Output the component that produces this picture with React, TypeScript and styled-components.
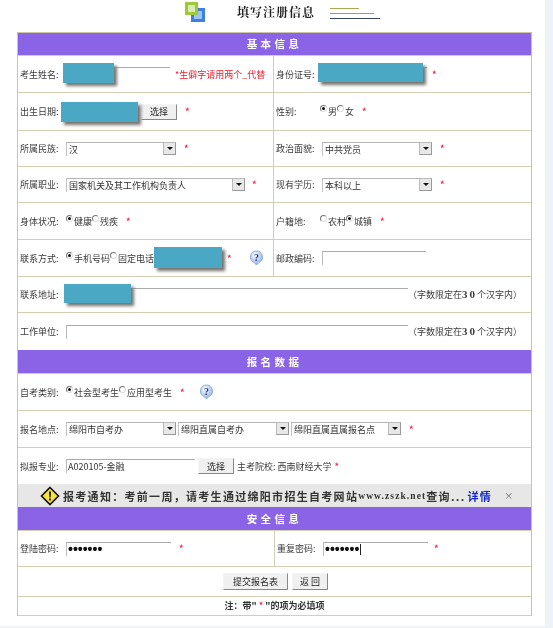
import React from 'react'
import styled, { createGlobalStyle } from 'styled-components'

const GlobalStyle = createGlobalStyle`
  html, body {
    margin: 0;
    padding: 0;
    background: #eef3f7;
  }
`

const Page = styled.div`
  width: 545px;
  height: 626px;
  box-sizing: border-box;
  padding: 0 13px 0 17px;
  background: #fff;
  color: #3a3a3a;
  font-family: 'Noto Sans CJK SC', 'Liberation Sans', sans-serif;
  font-size: 9px;
  filter: blur(0.3px);
`

const TitleBar = styled.div`
  height: 32px;
  display: flex;
  align-items: flex-start;
`

const Logo = styled.svg`
  width: 21px;
  height: 20px;
  margin: 2px 0 0 168px;
`

const Title = styled.h1`
  margin: 3px 0 0 31px;
  font-family: 'Noto Serif CJK SC', 'Noto Sans CJK SC', sans-serif;
  font-size: 12px;
  line-height: 18px;
  font-weight: 700;
  letter-spacing: 1px;
  color: #222;
`

const TitleLines = styled.div`
  display: flex;
  flex-direction: column;
  gap: 4px;
  margin: 8px 0 0 15px;
`

const TitleLine = styled.i<{ $w: number; $c: string }>`
  display: block;
  height: 1px;
  width: ${(p) => p.$w}px;
  background: ${(p) => p.$c};
`

const Table = styled.div`
  width: 515px;
  border: 1px solid #c9c5a6;
  box-sizing: border-box;
`

const Section = styled.div<{ $h?: number }>`
  height: ${(p) => p.$h ?? 23}px;
  background: #8a63e6;
  color: #fff;
  font-weight: 700;
  font-size: 10.5px;
  letter-spacing: 3.4px;
  line-height: ${(p) => p.$h ?? 23}px;
  text-align: center;
`

const Row = styled.div<{ $h: number }>`
  display: flex;
  height: ${(p) => p.$h}px;
  box-sizing: border-box;
  border-top: 1px solid #d3cfb4;
  border-bottom: 1px solid #d3cfb4;
  margin-bottom: -1px;
`

const Cell = styled.div<{ $w?: number }>`
  display: flex;
  align-items: center;
  box-sizing: border-box;
  padding-left: 2px;
  white-space: nowrap;
  ${(p) => (p.$w ? `width: ${p.$w}px;` : 'flex: 1;')}
  & + & {
    border-left: 1px solid #d3cfb4;
  }
`

const Label = styled.span<{ $w?: number }>`
  display: inline-block;
  width: ${(p) => p.$w ?? 46}px;
  flex: none;
`

const Star = styled.span<{ $l?: number }>`
  color: #f0304a;
  font-weight: 700;
  margin-left: ${(p) => p.$l ?? 8}px;
`

const RedNote = styled.span`
  color: #f01828;
  margin-left: 5px;
`

const Field = styled.span<{ $w: number }>`
  position: relative;
  display: inline-block;
  width: ${(p) => p.$w}px;
  height: 14px;
  flex: none;
`

const TextInput = styled.input`
  display: block;
  width: 100%;
  height: 14px;
  box-sizing: border-box;
  margin: 0;
  padding: 0 1px;
  border: none;
  border-top: 1px solid #aaa;
  border-left: 1px solid #bbb;
  outline: none;
  background: transparent;
  color: #333;
  font: inherit;
  &[type='password'] {
    font-family: 'Liberation Sans', sans-serif;
    font-size: 14px;
    font-weight: 700;
    color: #111;
  }
`

const Caret = styled.i`
  position: absolute;
  left: 37px;
  top: 2px;
  width: 1px;
  height: 11px;
  background: #222;
`

const Redacted = styled.span<{ $l: number; $t: number; $w: number; $h: number }>`
  position: absolute;
  left: ${(p) => p.$l}px;
  top: ${(p) => p.$t}px;
  width: ${(p) => p.$w}px;
  height: ${(p) => p.$h}px;
  background: #4aa8c4;
  box-shadow: 3px 3px 3px #77756f;
`

const SelectBox = styled.span<{ $w: number }>`
  position: relative;
  display: inline-block;
  flex: none;
  width: ${(p) => p.$w}px;
  height: 14px;
  margin-right: 2px;
`

const NativeSelect = styled.select`
  appearance: none;
  display: block;
  width: 100%;
  height: 14px;
  box-sizing: border-box;
  margin: 0;
  padding: 0 2px;
  border: none;
  border-top: 1px solid #b5b5b5;
  border-left: 1px solid #c4c4c4;
  background: transparent;
  color: #333;
  font: inherit;
  outline: none;
`

const Arrow = styled.i`
  position: absolute;
  right: 0;
  top: 0;
  width: 13px;
  height: 13px;
  box-sizing: border-box;
  border: 1px solid #999;
  border-top-color: #bbb;
  border-left-color: #bbb;
  background: #e8e8e8;
  &::after {
    content: '';
    position: absolute;
    left: 3px;
    top: 4px;
    border: 3px solid transparent;
    border-top: 3px solid #111;
    border-bottom: none;
  }
`

const PushButton = styled.button<{ $w: number; $l?: number }>`
  width: ${(p) => p.$w}px;
  height: 16px;
  flex: none;
  box-sizing: border-box;
  margin-left: ${(p) => p.$l ?? 0}px;
  padding: 0;
  border: 1px solid #f4f4f4;
  border-right-color: #888;
  border-bottom-color: #888;
  background: #f0f0f0;
  color: #222;
  font: inherit;
  line-height: 13px;
`

const RadioGroup = styled.span`
  display: inline-flex;
  align-items: center;
`

const RadioMark = styled.i<{ $on?: boolean }>`
  position: relative;
  top: -3px;
  width: 7px;
  height: 7px;
  box-sizing: border-box;
  margin-right: 1px;
  border-radius: 50%;
  border: 1px solid #777;
  border-right-color: #ddd;
  border-bottom-color: #ddd;
  ${(p) =>
    p.$on &&
    `&::after {
      content: '';
      position: absolute;
      left: 1px;
      top: 1px;
      width: 3px;
      height: 3px;
      border-radius: 50%;
      background: #111;
    }`}
`

const HelpIcon = styled.svg<{ $l: number }>`
  width: 15px;
  height: 16px;
  margin-left: ${(p) => p.$l}px;
  flex: none;
`

const Hint = styled.span<{ $l?: number }>`
  margin-left: ${(p) => p.$l ?? 0}px;
  & b {
    font-family: 'Liberation Serif', serif;
    font-size: 11px;
    letter-spacing: 2px;
  }
`

const Notice = styled.div`
  height: 23px;
  display: flex;
  align-items: center;
  background: #e7e7e7;
  color: #333;
  font-weight: 700;
  font-size: 11px;
  letter-spacing: 1.3px;
  white-space: nowrap;
`

const WarnIcon = styled.svg`
  width: 20px;
  height: 20px;
  margin: 0 3px 0 22px;
  flex: none;
`

const NoticeUrl = styled.span`
  font-family: 'Liberation Serif', serif;
  font-size: 9.5px;
  letter-spacing: 1.1px;
`

const NoticeLink = styled.a`
  color: #1428c8;
  margin-left: 2px;
`

const CloseMark = styled.span`
  margin-left: 12px;
  color: #666;
  font-weight: 400;
  font-size: 9px;
`

const ButtonCell = styled.div`
  flex: 1;
  display: flex;
  justify-content: center;
  align-items: center;
  gap: 4px;
  padding-left: 2px;
  & > button {
    height: 17px;
  }
`

const FootNote = styled.div`
  flex: 1;
  text-align: center;
  font-weight: 700;
  line-height: 18px;
  color: #333;
`

const Help = ({ l }: { l: number }) => (
  <HelpIcon $l={l} viewBox="0 0 15 16">
    <defs>
      <radialGradient id="helpFill" cx="0.4" cy="0.3" r="0.8">
        <stop offset="0" stopColor="#ffffff" />
        <stop offset="1" stopColor="#7fa6dc" />
      </radialGradient>
    </defs>
    <path d="M7.5 1a6 6 0 0 1 2.4 11.5L7.5 15 5.1 12.5A6 6 0 0 1 7.5 1z" fill="url(#helpFill)" stroke="#8fb0dc" />
    <text x="7.5" y="11" textAnchor="middle" fontSize="10" fontWeight="700" fill="#1c2f9c" fontFamily="Liberation Serif, serif">
      ?
    </text>
  </HelpIcon>
)

const Radio = ({ on, children }: { on?: boolean; children: React.ReactNode }) => (
  <>
    <RadioMark $on={on} />
    <span>{children}</span>
  </>
)

const Select = ({ w, value }: { w: number; value: string }) => (
  <SelectBox $w={w}>
    <NativeSelect defaultValue={value}>
      <option>{value}</option>
    </NativeSelect>
    <Arrow />
  </SelectBox>
)

const LimitHint = () => (
  <Hint>
    （字数限定在<b>30</b>个汉字内）
  </Hint>
)

export default function App() {
  return (
    <>
      <GlobalStyle />
      <Page>
        <TitleBar>
          <Logo viewBox="0 0 21 20">
            <rect x="6" y="6" width="14" height="14" fill="#3f7fe0" />
            <rect x="9" y="9" width="8" height="8" fill="#9cc4f2" />
            <rect x="0" y="0" width="13" height="13" fill="#9cc83c" />
            <rect x="3" y="3" width="7" height="7" fill="#dbeab0" />
          </Logo>
          <Title>填写注册信息</Title>
          <TitleLines>
            <TitleLine $w={29} $c="#a8a850" />
            <TitleLine $w={44} $c="#45b4dc" />
            <TitleLine $w={50} $c="#3a4468" />
          </TitleLines>
        </TitleBar>
        <Table>
          <Section $h={22}>基本信息</Section>
          <Row $h={38}>
            <Cell $w={255}>
              <Label>考生姓名:</Label>
              <Field $w={104}>
                <TextInput readOnly />
                <Redacted $l={-3} $t={-4} $w={51} $h={20} />
              </Field>
              <RedNote>*生僻字请用两个_代替</RedNote>
            </Cell>
            <Cell>
              <Label>身份证号:</Label>
              <Field $w={105}>
                <TextInput readOnly />
                <Redacted $l={-4} $t={-4} $w={105} $h={19} />
              </Field>
              <Star $l={5}>*</Star>
            </Cell>
          </Row>
          <Row $h={39}>
            <Cell $w={255}>
              <Label $w={41}>出生日期:</Label>
              <Field $w={80}>
                <Redacted $l={0} $t={-3} $w={77} $h={20} />
              </Field>
              <PushButton $w={36}>选择</PushButton>
              <Star>*</Star>
            </Cell>
            <Cell>
              <Label $w={44}>性别:</Label>
              <RadioGroup>
                <Radio on>男</Radio>
                <Radio>女</Radio>
              </RadioGroup>
              <Star>*</Star>
            </Cell>
          </Row>
          <Row $h={37}>
            <Cell $w={255}>
              <Label>所属民族:</Label>
              <Select w={110} value="汉" />
              <Star $l={6}>*</Star>
            </Cell>
            <Cell>
              <Label>政治面貌:</Label>
              <Select w={110} value="中共党员" />
              <Star $l={6}>*</Star>
            </Cell>
          </Row>
          <Row $h={37}>
            <Cell $w={255}>
              <Label>所属职业:</Label>
              <Select w={179} value="国家机关及其工作机构负责人" />
              <Star $l={5}>*</Star>
            </Cell>
            <Cell>
              <Label>现有学历:</Label>
              <Select w={110} value="本科以上" />
              <Star $l={6}>*</Star>
            </Cell>
          </Row>
          <Row $h={38}>
            <Cell $w={255}>
              <Label>身体状况:</Label>
              <RadioGroup>
                <Radio on>健康</Radio>
                <Radio>残疾</Radio>
              </RadioGroup>
              <Star>*</Star>
            </Cell>
            <Cell>
              <Label $w={44}>户籍地:</Label>
              <RadioGroup>
                <Radio>农村</Radio>
                <Radio on>城镇</Radio>
              </RadioGroup>
              <Star>*</Star>
            </Cell>
          </Row>
          <Row $h={38}>
            <Cell $w={255}>
              <Label>联系方式:</Label>
              <RadioGroup>
                <Radio on>手机号码</Radio>
                <Radio>固定电话</Radio>
              </RadioGroup>
              <Field $w={70}>
                <Redacted $l={0} $t={-4} $w={68} $h={21} />
              </Field>
              <Star $l={3}>*</Star>
              <Help l={17} />
            </Cell>
            <Cell>
              <Label>邮政编码:</Label>
              <Field $w={104}>
                <TextInput readOnly />
              </Field>
            </Cell>
          </Row>
          <Row $h={37}>
            <Cell>
              <Label>联系地址:</Label>
              <Field $w={342}>
                <TextInput readOnly />
                <Redacted $l={-2} $t={-4} $w={67} $h={19} />
              </Field>
              <LimitHint />
            </Cell>
          </Row>
          <Row $h={39}>
            <Cell>
              <Label>工作单位:</Label>
              <Field $w={342}>
                <TextInput readOnly />
              </Field>
              <LimitHint />
            </Cell>
          </Row>
          <Section>报名数据</Section>
          <Row $h={38}>
            <Cell>
              <Label>自考类别:</Label>
              <RadioGroup>
                <Radio on>社会型考生</Radio>
                <Radio>应用型考生</Radio>
              </RadioGroup>
              <Star>*</Star>
              <Help l={14} />
            </Cell>
          </Row>
          <Row $h={38}>
            <Cell>
              <Label>报名地点:</Label>
              <Select w={110} value="绵阳市自考办" />
              <Select w={111} value="绵阳直属自考办" />
              <Select w={110} value="绵阳直属直属报名点" />
              <Star $l={6}>*</Star>
            </Cell>
          </Row>
          <Row $h={38}>
            <Cell>
              <Label>拟报专业:</Label>
              <Field $w={129}>
                <TextInput readOnly defaultValue="A020105-金融" />
              </Field>
              <PushButton $w={36} $l={3}>
                选择
              </PushButton>
              <Hint $l={3}>主考院校: 西南财经大学</Hint>
              <Star $l={3}>*</Star>
            </Cell>
          </Row>
          <Notice>
            <WarnIcon viewBox="0 0 20 20">
              <path d="M10 1.5L18.5 10 10 18.5 1.5 10z" fill="#f6e23a" stroke="#111" strokeWidth="1.6" />
              <path d="M9 5.5h2l-.4 6h-1.2zM9.1 12.6h1.8v1.8H9.1z" fill="#111" />
            </WarnIcon>
            报考通知：考前一周，请考生通过绵阳市招生自考网站
            <NoticeUrl>www.zszk.net</NoticeUrl>
            查询...
            <NoticeLink>详情</NoticeLink>
            <CloseMark>×</CloseMark>
          </Notice>
          <Section>安全信息</Section>
          <Row $h={37}>
            <Cell $w={256}>
              <Label>登陆密码:</Label>
              <Field $w={105}>
                <TextInput readOnly type="password" defaultValue="1234567" />
              </Field>
              <Star>*</Star>
            </Cell>
            <Cell>
              <Label>重复密码:</Label>
              <Field $w={105}>
                <TextInput readOnly type="password" defaultValue="1234567" />
                <Caret />
              </Field>
              <Star $l={6}>*</Star>
            </Cell>
          </Row>
          <Row $h={31}>
            <ButtonCell>
              <PushButton $w={65}>提交报名表</PushButton>
              <PushButton $w={36}>返 回</PushButton>
            </ButtonCell>
          </Row>
          <Row $h={20}>
            <FootNote>
              注：带" <Star $l={0}>*</Star> "的项为必填项
            </FootNote>
          </Row>
        </Table>
      </Page>
    </>
  )
}
